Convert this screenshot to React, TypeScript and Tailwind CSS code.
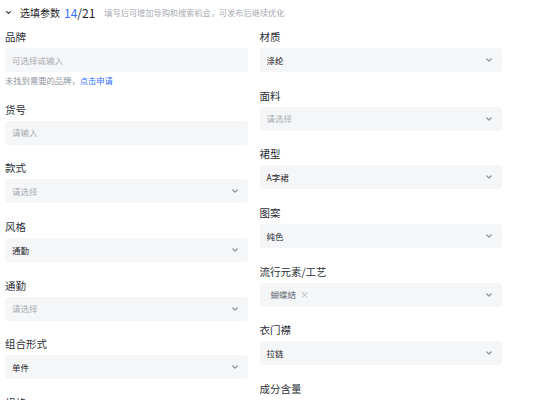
import React from 'react'

const Chevron = ({ className = '' }: { className?: string }) => (
  <svg viewBox="0 0 10 10" className={className} fill="none">
    <path d="M2.8 4 5 6 7.2 4" stroke="currentColor" strokeWidth="1.3" strokeLinecap="round" strokeLinejoin="round" />
  </svg>
)

type Field = {
  label: string
  value?: string
  placeholder?: string
  select?: boolean
  tag?: string
  help?: boolean
}

const left: Field[] = [
  { label: '品牌', placeholder: '可选择或输入', help: true },
  { label: '货号', placeholder: '请输入' },
  { label: '款式', placeholder: '请选择', select: true },
  { label: '风格', value: '通勤', select: true },
  { label: '通勤', placeholder: '请选择', select: true },
  { label: '组合形式', value: '单件', select: true },
  { label: '规格', placeholder: '请选择', select: true },
]

const right: Field[] = [
  { label: '材质', value: '涤纶', select: true },
  { label: '面料', placeholder: '请选择', select: true },
  { label: '裙型', value: 'A字裙', select: true },
  { label: '图案', value: '纯色', select: true },
  { label: '流行元素/工艺', tag: '蝴蝶结', select: true },
  { label: '衣门襟', value: '拉链', select: true },
  { label: '成分含量', placeholder: '请选择', select: true },
]

const FieldRow = ({ f }: { f: Field }) => (
  <div className="mb-[15.7px]">
    <div className="text-[10.5px] leading-[16px] text-[#2b2f36] mb-[3px]">{f.label}</div>
    <div className="h-[24px] rounded-[4px] bg-[#f5f6f8] flex items-center pl-[7px] pr-[8px]">
      {f.tag ? (
        <span className="text-[8.5px] text-[#646a73] pl-[4px] flex items-center gap-[4px]">
          {f.tag}
          <span className="text-[#a8abb2] text-[9px]">×</span>
        </span>
      ) : f.value ? (
        <span className="text-[8.5px] text-[#1f2329]">{f.value}</span>
      ) : (
        <span className="text-[8.5px] text-[#a8abb2]">{f.placeholder}</span>
      )}
      {f.select && <Chevron className="ml-auto w-[10px] h-[10px] text-[#8f959e]" />}
    </div>
    {f.help && (
      <div className="text-[8.3px] leading-[12px] mt-[2px] mb-[0.5px] text-[#8f959e]">
        未找到需要的品牌，<span className="text-[#3370ff]">点击申请</span>
      </div>
    )}
  </div>
)

export default function App() {
  return (
    <div
      className="w-[544px] h-[400px] overflow-hidden bg-white"
      style={{ fontFamily: '"Noto Sans CJK SC", "Noto Sans", sans-serif' }}
    >
      <div className="flex items-center h-[24px] pl-[4px] pt-[1px]">
        <Chevron className="w-[9px] h-[9px] text-[#2b2f36]" />
        <span className="ml-[7px] text-[10px] text-[#1f2329]">选填参数</span>
        <span className="ml-[4px] text-[12px] text-[#1f2329]">
          <span className="text-[#3370ff]">14</span>/21
        </span>
        <span className="ml-[9px] text-[8.2px] text-[#a8abb2]">填写后可增加导购和搜索机会，可发布后继续优化</span>
      </div>
      <div className="flex gap-[12px] pl-[5px] pt-[5px] w-[502px]">
        <div className="flex-1">
          {left.map((f) => (
            <FieldRow key={f.label + 'l'} f={f} />
          ))}
        </div>
        <div className="flex-1">
          {right.map((f) => (
            <FieldRow key={f.label + 'r'} f={f} />
          ))}
        </div>
      </div>
    </div>
  )
}
